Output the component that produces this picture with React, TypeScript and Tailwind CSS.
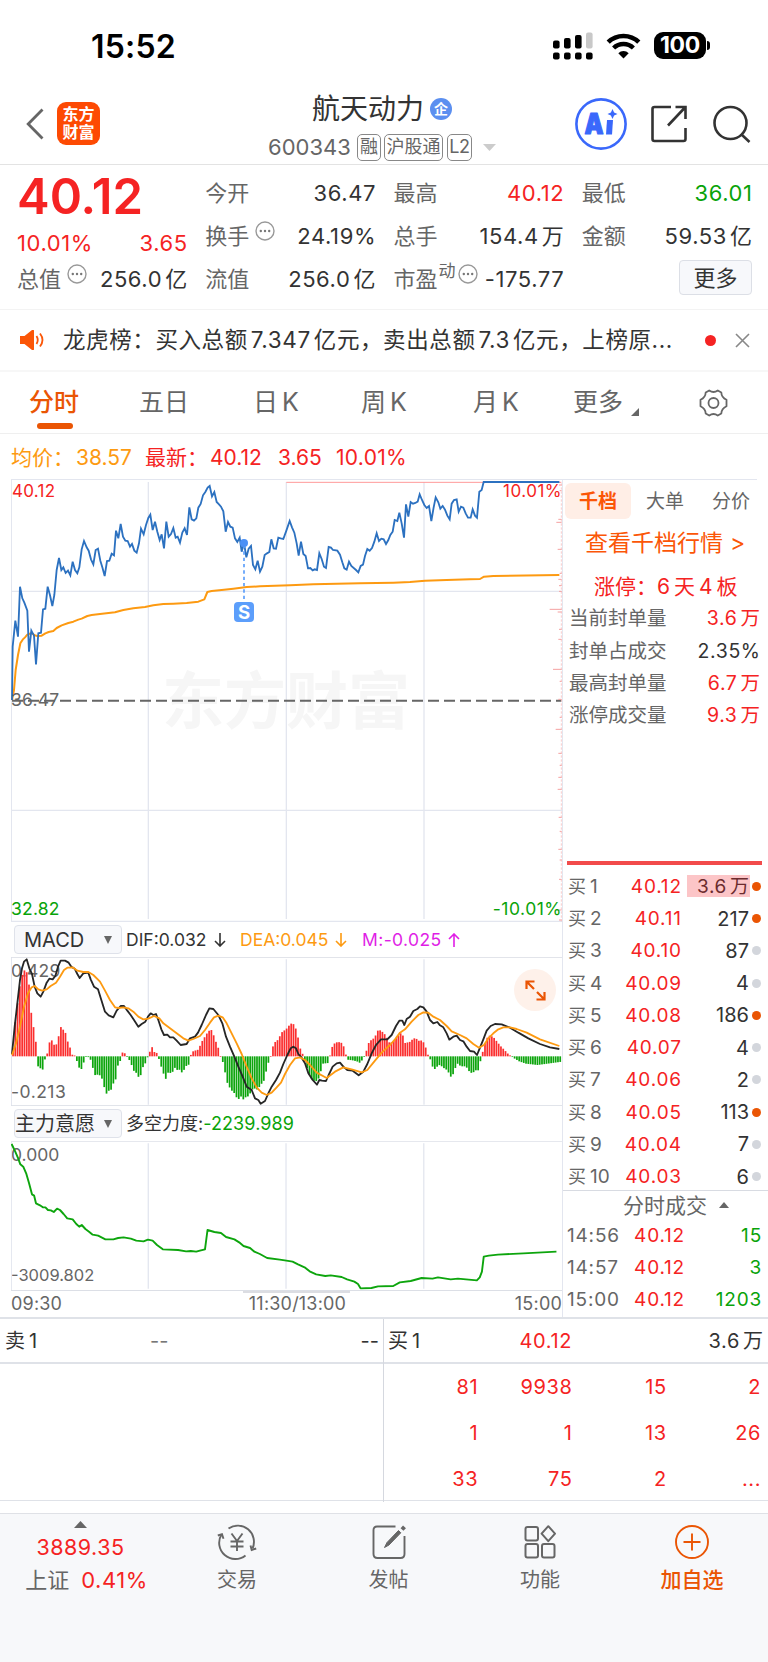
import React from "react";

type Quote = {
  label: string;
  value: string;
  color?: string;
  more?: boolean;
  sup?: string;
};

const quoteColumns: Quote[][] = [
  [
    { label: "今开", value: "36.47" },
    { label: "换手", value: "24.19%", more: true },
    { label: "流值", value: "256.0亿" },
  ],
  [
    { label: "最高", value: "40.12", color: "text-[#f52323]" },
    { label: "总手", value: "154.4万" },
    { label: "市盈", value: "-175.77", more: true, sup: "动" },
  ],
  [
    { label: "最低", value: "36.01", color: "text-[#09a309]" },
    { label: "金额", value: "59.53亿" },
  ],
];

const sealStats = [
  { label: "当前封单量", value: "3.6万", color: "text-[#f52323]" },
  { label: "封单占成交", value: "2.35%", color: "text-[#333]" },
  { label: "最高封单量", value: "6.7万", color: "text-[#f52323]" },
  { label: "涨停成交量", value: "9.3万", color: "text-[#f52323]" },
];

const buyOrders = [
  { price: "40.12", volume: "3.6万", hot: true },
  { price: "40.11", volume: "217", hot: true },
  { price: "40.10", volume: "87", hot: false },
  { price: "40.09", volume: "4", hot: false },
  { price: "40.08", volume: "186", hot: true },
  { price: "40.07", volume: "4", hot: false },
  { price: "40.06", volume: "2", hot: false },
  { price: "40.05", volume: "113", hot: true },
  { price: "40.04", volume: "7", hot: false },
  { price: "40.03", volume: "6", hot: false },
];

const trades = [
  { time: "14:56", price: "40.12", volume: "15" },
  { time: "14:57", price: "40.12", volume: "3" },
  { time: "15:00", price: "40.12", volume: "1203" },
];

const queue = [
  ["81", "9938", "15", "2"],
  ["1", "1", "13", "26"],
  ["33", "75", "2", "..."],
];

const pricePoints =
  "36,690 38,530 46,452 54,500 60,350 67,385 73,398 82,422 87,545 94,482 102,497 108,583 115,490 123,488 129,418 136,416 143,350 150,376 157,408 163,375 170,300 177,264 184,300 190,292 197,309 204,302 211,316 218,275 225,300 232,310 238,292 245,238 252,213 260,232 266,242 273,268 280,283 287,240 294,236 301,272 307,292 314,318 321,273 328,272 335,251 342,256 348,182 355,205 362,162 369,200 376,212 383,213 390,230 396,222 403,242 410,248 417,220 423,176 431,193 438,165 445,144 451,134 458,180 465,155 472,185 479,210 485,193 492,235 499,155 506,200 513,192 520,174 527,203 533,200 540,218 547,188 554,175 561,195 568,112 575,148 582,152 589,145 595,113 602,102 609,76 616,66 623,53 629,48 636,79 643,66 650,96 657,103 663,110 670,124 677,185 684,156 691,170 698,173 705,205 712,216 719,203 725,245 732,219 739,262 746,236 753,228 759,285 766,298 773,272 780,305 787,290 794,255 801,250 808,246 814,208 821,235 828,236 835,203 842,205 850,207 858,185 869,153 876,172 883,188 890,220 896,257 903,215 910,252 917,258 924,295 931,294 938,301 944,298 951,300 958,250 965,267 972,290 978,294 986,231 993,233 999,240 1012,242 1020,254 1027,277 1033,295 1040,299 1047,275 1054,288 1068,300 1075,307 1082,288 1089,284 1095,258 1102,237 1109,242 1116,234 1123,215 1130,190 1137,213 1144,206 1151,208 1158,222 1165,210 1171,195 1178,185 1184,150 1192,153 1198,128 1205,160 1212,203 1218,103 1225,140 1232,96 1239,101 1246,99 1253,95 1259,73 1266,90 1273,105 1280,114 1287,108 1294,153 1301,112 1307,82 1315,97 1321,116 1328,108 1335,119 1342,137 1349,148 1355,101 1362,90 1370,88 1376,125 1383,110 1390,113 1397,130 1404,143 1412,143 1418,118 1425,137 1431,143 1438,65 1445,60 1451,36 1678,36";

const averagePoints =
  "36,690 42,660 47,600 54,555 61,520 68,509 75,502 82,494 95,489 104,496 112,498 125,497 136,490 146,486 160,483 170,474 185,466 205,459 220,455 235,449 245,446 262,438 275,435 300,432 345,427 370,420 400,415 435,411 460,406 490,402 520,401 560,399 595,395 613,388 622,366 635,363 665,360 700,356 740,351 780,349 870,346 940,343 1080,340 1180,338 1230,336 1275,332 1340,330 1410,328 1440,327 1452,320 1480,318 1678,315";

const difPoints =
  "36,462 44,380 52,310 60,240 66,205 72,185 80,178 88,205 96,222 104,260 112,280 122,290 130,275 140,248 148,236 158,238 166,228 174,200 182,182 195,182 206,188 214,200 224,206 232,222 239,234 250,220 265,218 272,238 282,260 294,268 304,300 315,335 326,346 340,352 350,332 362,318 372,318 382,332 392,345 402,360 415,380 425,372 436,365 444,350 452,340 460,345 468,342 475,360 484,388 492,405 502,404 510,412 520,412 530,422 542,435 560,432 570,415 585,410 594,398 605,375 618,345 628,325 640,327 655,345 667,370 678,410 690,440 703,470 715,500 728,530 740,560 755,570 765,595 775,600 782,611 795,603 805,580 815,560 828,540 840,518 850,492 862,465 872,445 880,440 888,445 895,462 904,472 915,490 925,520 938,540 951,554 958,540 966,542 978,543 986,525 998,500 1010,490 1020,488 1030,500 1042,510 1058,512 1076,526 1090,515 1102,492 1115,460 1128,435 1143,418 1162,418 1175,405 1188,378 1198,362 1207,362 1213,375 1220,357 1230,350 1240,333 1252,327 1260,319 1270,322 1280,335 1290,360 1300,370 1312,366 1320,376 1330,382 1340,400 1348,419 1360,410 1370,407 1380,420 1390,424 1400,440 1410,453 1422,455 1431,465 1440,443 1450,418 1460,392 1472,378 1485,372 1505,373 1530,383 1555,398 1585,415 1620,432 1650,442 1678,447";

const deaPoints =
  "36,465 48,430 60,380 72,320 84,280 95,262 104,258 115,268 126,272 140,268 152,258 168,248 180,230 192,210 202,203 218,202 232,212 250,216 265,216 280,225 300,245 315,272 330,300 345,322 355,324 370,322 385,325 400,335 415,350 430,358 445,356 462,348 478,355 490,370 510,385 530,400 550,415 565,422 580,417 600,408 615,390 630,368 642,352 655,347 668,352 680,370 695,400 710,430 725,462 740,500 755,535 770,562 785,578 800,585 815,578 830,562 843,548 855,522 870,495 885,475 900,472 915,480 930,495 950,518 980,534 1005,515 1030,502 1055,508 1085,517 1102,510 1125,482 1145,458 1170,435 1185,418 1200,398 1215,388 1235,365 1255,345 1270,337 1285,338 1300,350 1320,360 1340,378 1355,394 1380,405 1400,415 1420,432 1437,443 1452,435 1465,415 1480,400 1495,388 1510,382 1530,382 1550,387 1580,398 1620,418 1678,438";

const forcePoints =
  "32,132 42,155 50,175 56,193 64,200 72,220 80,250 88,283 94,287 99,310 110,316 118,322 125,322 132,330 140,331 148,336 157,326 165,330 175,342 185,355 200,358 210,372 218,380 225,375 235,387 245,395 255,404 270,407 290,418 312,418 325,414 340,412 360,416 375,422 395,424 407,419 420,422 432,435 448,448 490,450 512,454 525,453 540,455 550,452 564,448 571,390 590,396 608,399 622,411 645,418 658,427 670,438 688,444 700,455 715,462 735,474 770,479 788,482 805,485 820,493 838,502 852,514 870,523 895,528 910,526 940,531 955,538 975,545 985,552 992,565 1022,564 1040,559 1082,558 1100,547 1130,543 1160,534 1190,536 1205,532 1240,538 1260,536 1312,541 1320,532 1326,515 1331,470 1345,467 1370,464 1440,460 1531,455";

// [x, height] knots, the bars in between are interpolated
const macdKnots = [
  [36, 20], [43, 100], [50, 158], [57, 210], [64, 245], [70, 258], [77, 255], [84, 220], [91, 132], [98, 88],
  [105, 43], [109, -10], [112, -32], [119, -36], [126, -40], [132, -10], [139, 8], [146, 42], [153, 48], [160, 34],
  [167, 36], [174, 63], [180, 88], [187, 80], [194, 70], [200, 46], [207, 28], [214, 5], [221, 3], [228, -14],
  [234, -33], [241, -40], [248, -20], [255, -1], [262, -2], [269, -10], [276, -35], [283, -57], [290, -55], [297, -57],
  [303, -66], [310, -92], [317, -112], [324, -103], [331, -100], [338, -80], [345, -68], [351, -28], [358, -14], [365, 12],
  [372, 9], [379, -2], [386, -12], [393, -28], [400, -46], [407, -50], [413, -62], [420, -56], [427, -30], [434, -20],
  [440, -3], [447, 14], [454, 28], [461, 12], [468, 10], [475, -10], [482, -34], [489, -55], [495, -68], [502, -48],
  [509, -50], [516, -46], [523, -33], [530, -42], [537, -40], [544, -50], [551, -38], [558, -26], [565, -25], [571, 10],
  [578, 16], [592, 20], [599, 35], [606, 50], [613, 60], [620, 72], [630, 82], [636, 70], [643, 50], [650, 30],
  [655, 20], [659, 0], [667, -20], [673, -50], [680, -82], [690, -100], [700, -110], [708, -125], [714, -128], [721, -120],
  [728, -130], [735, -122], [742, -120], [750, -108], [757, -95], [770, -100], [780, -85], [790, -72], [797, -40], [804, -14],
  [811, 5], [818, 38], [825, 45], [832, 50], [839, 65], [845, 75], [855, 80], [862, 90], [873, 100], [880, 95],
  [886, 80], [893, 50], [900, 15], [907, 5], [914, -20], [921, -42], [928, -62], [935, -72], [945, -75], [952, -70],
  [959, -48], [966, -22], [982, -20], [989, 10], [996, 35], [1003, 40], [1010, 43], [1020, 42], [1027, 35], [1033, 12],
  [1040, -10], [1055, -12], [1068, -15], [1078, -20], [1088, -5], [1095, 10], [1102, 38], [1110, 48], [1120, 55], [1127, 68],
  [1133, 82], [1140, 76], [1147, 72], [1155, 62], [1165, 42], [1175, 42], [1183, 52], [1192, 62], [1200, 70], [1208, 60],
  [1215, 32], [1222, 46], [1229, 42], [1236, 54], [1245, 54], [1255, 46], [1263, 48], [1271, 38], [1278, 15], [1283, 0],
  [1290, -12], [1297, -38], [1305, -38], [1312, -25], [1320, -28], [1330, -36], [1340, -42], [1346, -55], [1353, -66], [1360, -42],
  [1370, -22], [1380, -30], [1395, -30], [1405, -45], [1415, -52], [1422, -42], [1435, -42], [1440, -5], [1446, 15], [1453, 42],
  [1462, 62], [1470, 62], [1480, 55], [1490, 42], [1500, 30], [1510, 20], [1520, 9], [1530, 1], [1540, -6], [1555, -15],
  [1575, -22], [1610, -26], [1640, -22], [1684, -16],
];

const barHeight = (x: number) => {
  const i = macdKnots.findIndex((k) => k[0] >= x);
  if (i <= 0) return macdKnots[0][1];
  const [x0, h0] = macdKnots[i - 1];
  const [x1, h1] = macdKnots[i];
  return h0 + ((h1 - h0) * (x - x0)) / (x1 - x0);
};

const macdBars = Array.from({ length: 241 }, (_, i) => {
  const x = 36.5 + i * 6.84;
  return { x, h: barHeight(x) };
});

// [y, length] of the volume profile on the right edge
const volumeTicks = [
  [45, 8], [62, 6], [148, 10], [157, 16], [238, 12], [310, 6], [328, 10], [347, 8], [364, 8], [418, 36],
  [426, 12], [478, 8], [508, 10], [598, 26], [634, 6], [688, 10], [742, 6], [778, 18], [850, 10], [886, 6],
  [922, 10], [958, 12], [1042, 9], [1084, 6], [1138, 10], [1170, 6], [1228, 8], [1320, 10], [1350, 8],
];

const MoreDot = () => (
  <svg className="mb-[10px] shrink-0" width="20" height="20" viewBox="0 0 20 20">
    <circle cx="10" cy="10" r="9" fill="none" stroke="#999" strokeWidth="1.4" />
    <circle cx="5.8" cy="10" r="1.2" fill="#777" />
    <circle cx="10" cy="10" r="1.2" fill="#777" />
    <circle cx="14.2" cy="10" r="1.2" fill="#777" />
  </svg>
);

// puts a small gap between the digits and a trailing unit
const Num = ({ children }: { children: string }) => {
  const unit = children.match(/[万亿]$/) ? children.slice(-1) : "";
  return (
    <span className="-mr-[0.6px] tracking-[0.6px] whitespace-nowrap">
      {unit ? children.slice(0, -1) : children}
      {unit && <span className="ml-[3px]">{unit}</span>}
    </span>
  );
};

const StatusBar = () => (
  <div className="flex h-[91px] items-center justify-between pr-[58px] pl-[91px]">
    <span className="mt-[2px] text-[32px] font-semibold tracking-[0.2px] text-black">15:52</span>
    <div className="flex items-center gap-[13px]">
      <svg width="40" height="28" viewBox="0 0 40 28">
        <rect x="0" y="8.5" width="6.6" height="8" rx="2" />
        <rect x="11" y="6" width="6.6" height="10.5" rx="2" />
        <rect x="22" y="3" width="6.6" height="13.5" rx="2" />
        <rect x="33" y="0.5" width="6.6" height="16" rx="2" fill="#c8c8c8" />
        <rect x="0" y="20.5" width="6.6" height="7" rx="2" />
        <rect x="11" y="20.5" width="6.6" height="7" rx="2" />
        <rect x="22" y="20.5" width="6.6" height="7" rx="2" />
        <rect x="33" y="20.5" width="6.6" height="7" rx="2" />
      </svg>
      <svg width="35" height="26" viewBox="0 0 35 26">
        <path d="M2.2 9.2a22 22 0 0 1 30.6 0" fill="none" stroke="#000" strokeWidth="4.6" />
        <path d="M7.6 15a14.2 14.2 0 0 1 19.8 0" fill="none" stroke="#000" strokeWidth="4.4" />
        <path d="M17.5 25.5l-5.2-5.3a7.4 7.4 0 0 1 10.4 0z" />
      </svg>
      <div className="flex items-center">
        <div className="flex h-[27px] w-[52px] items-center justify-center rounded-[9px] bg-black text-[23px] font-bold tracking-[-0.3px] text-white">
          100
        </div>
        <div className="ml-[1px] h-[9px] w-[3px] rounded-r-full bg-black" />
      </div>
    </div>
  </div>
);

const Header = () => (
  <div className="grid h-[74px] grid-cols-[267px_230px_271px] items-start border-b border-[#e3e3e3]">
    <div className="mt-[11px] flex items-center gap-[13px] pl-[26px]">
      <svg width="18" height="32" viewBox="0 0 18 32">
        <path d="M16.5 1.5L2.2 16l14.3 14.5" fill="none" stroke="#666" strokeWidth="2.8" />
      </svg>
      <div className="flex h-[43px] w-[43px] flex-col items-center justify-center rounded-[9px] bg-[#fd4a03] text-[16px] leading-[17.5px] font-bold text-white">
        <span>东方</span>
        <span>财富</span>
      </div>
    </div>
    <div className="mt-[2px] flex flex-col items-center">
      <div className="flex h-[32px] items-center gap-[6px]">
        <span className="text-[28px] text-[#333]">航天动力</span>
        <span className="flex h-[22px] w-[22px] items-center justify-center rounded-full bg-[#5b8ff0] text-[14px] font-bold text-white">
          企
        </span>
      </div>
      <div className="mt-[8px] flex h-[28px] items-center text-[21px] text-[#666]">
        <span className="mr-[6px] text-[22px]">600343</span>
        <span className="mr-[3px] flex h-[27px] w-[24px] items-center justify-center rounded-[5px] border border-[#888] text-[18px]">融</span>
        <span className="mr-[4px] flex h-[27px] w-[59px] items-center justify-center rounded-[5px] border border-[#888] text-[18px] whitespace-nowrap">
          沪股通
        </span>
        <span className="flex h-[27px] w-[25px] items-center justify-center rounded-[5px] border border-[#888] text-[18px] tracking-[-0.5px]">L2</span>
        <svg className="ml-[11px]" width="13" height="7" viewBox="0 0 13 7">
          <path d="M0 0h13L6.5 7z" fill="#ccc" />
        </svg>
      </div>
    </div>
    <div className="mt-[7px] flex h-[52px] items-center pl-[78px]">
      <svg width="52" height="52" viewBox="0 0 52 52">
        <circle cx="26" cy="26" r="24.6" fill="#fff" stroke="#3a68fb" strokeWidth="2.6" />
        <text
          x="9.5"
          y="36"
          fontSize="28"
          fontWeight="900"
          fill="#3a68fb"
          stroke="#3a68fb"
          strokeWidth="1.2"
          strokeLinejoin="round"
          textLength="19"
          lengthAdjust="spacingAndGlyphs"
        >
          A
        </text>
        <path d="M32 22h6l-1 14.5h-6z" fill="#3a68fb" />
        <path d="M37.5 11l1.6 3.4 3.4 1.6-3.4 1.6-1.6 3.4-1.6-3.4-3.4-1.6 3.4-1.6z" fill="#3a68fb" />
      </svg>
      <svg className="ml-[24px]" width="37" height="38" viewBox="0 0 37 38" fill="none" stroke="#333" strokeWidth="2.6">
        <path d="M20 2H3.5Q1.5 2 1.5 4v30q0 2 2 2h29q2 0 2-2V23" />
        <path d="M24.5 2h10v12M34 2.5L17 20.5" />
      </svg>
      <svg className="ml-[25px]" width="38" height="38" viewBox="0 0 38 38" fill="none" stroke="#333" strokeWidth="2.6">
        <circle cx="17.5" cy="18" r="16" />
        <path d="M28 29l8.5 8" />
      </svg>
    </div>
  </div>
);

const Quotes = () => (
  <div className="grid h-[145px] grid-cols-4 gap-x-[18px] border-b border-[#f3f3f3] pt-[6px] pr-[16px] pl-[17px] text-[22px]">
    <div className="flex flex-col text-[#f52323]">
      <div className="flex h-[50px] items-center text-[49px] font-semibold">40.12</div>
      <div className="flex h-[43px] items-center justify-between">
        <Num>10.01%</Num>
        <Num>3.65</Num>
      </div>
      <div className="flex h-[30px] items-center justify-between">
        <span className="flex items-center gap-[6px] text-[#666]">
          总值
          <MoreDot />
        </span>
        <span className="text-[#333]">
          <Num>256.0亿</Num>
        </span>
      </div>
    </div>
    {quoteColumns.map((column, i) => (
      <div key={i} className="flex flex-col">
        {column.map((q) => (
          <div key={q.label} className="flex h-[43px] items-center justify-between">
            <span className="flex items-center text-[#666]">
              {q.label}
              {q.sup && <span className="mb-[14px] ml-px text-[17px]">{q.sup}</span>}
              {q.more && <span className={q.sup ? "ml-[2px]" : "ml-[6px]"}><MoreDot /></span>}
            </span>
            <span className={q.color || "text-[#333]"}>
              <Num>{q.value}</Num>
            </span>
          </div>
        ))}
        {i === 2 && (
          <button className="mt-[3px] flex h-[35px] w-[73px] items-center justify-center self-end rounded-[4px] border border-[#dcdfe6] bg-[#f7f8fb] text-[#333]">
            更多
          </button>
        )}
      </div>
    ))}
  </div>
);

const Notice = () => (
  <div className="flex h-[62px] items-center border-b-2 border-[#f7f7f7] pl-[20px] text-[22.5px] text-[#333]">
    <svg width="25" height="20" viewBox="0 0 25 20">
      <path d="M0 6h4.5L12 0q2-1 2 1v18q0 2-2 1l-7.5-6H0z" fill="#fb5607" />
      <path d="M16.5 6q2.5 4 0 8M20 3.5q5 6.5 0 13" fill="none" stroke="#fb5607" strokeWidth="1.8" />
    </svg>
    <span className="ml-[18px] w-[611px] tracking-[0.6px] whitespace-nowrap">
      龙虎榜：买入总额<span className="mx-[3px]">7.347</span>亿元，卖出总额
      <span className="mx-[3px]">7.3</span>亿元，上榜原...
    </span>
    <span className="ml-[31px] h-[11px] w-[11px] rounded-full bg-[#f52323]" />
    <svg className="ml-[19px]" width="15" height="15" viewBox="0 0 15 15">
      <path d="M1 1l13 13M14 1L1 14" stroke="#888" strokeWidth="1.6" />
    </svg>
  </div>
);

const Tabs = () => (
  <div className="flex h-[62px] items-center border-b border-[#efefef] text-[25px] text-[#666]">
    <div className="relative ml-[29px] w-[110px] font-medium text-[#ea5504]">
      分时
      <span className="absolute top-[33px] left-[8px] h-[6px] w-[36px] rounded-full bg-[#ea5504]" />
    </div>
    <div className="w-[114px]">五日</div>
    <div className="w-[108px]">日<span className="ml-[4px]">K</span></div>
    <div className="w-[112px]">周<span className="ml-[4px]">K</span></div>
    <div className="w-[100px]">月<span className="ml-[4px]">K</span></div>
    <div className="flex w-[126px] items-center gap-[8px]">
      更多
      <svg className="mt-[18px]" width="8" height="8" viewBox="0 0 8 8">
        <path d="M8 0v8H0z" fill="#666" />
      </svg>
    </div>
    <svg width="29" height="28" viewBox="0 0 29 28" fill="none" stroke="#666" strokeWidth="1.8">
      <path
        d="M10.2 1.5Q14.5 4.5 18.8 1.5L22.3 3.5Q22.5 8.5 27.5 10.8V17.2Q22.5 19.5 22.3 24.5L18.8 26.5Q14.5 23.5 10.2 26.5L6.7 24.5Q6.5 19.5 1.5 17.2V10.8Q6.5 8.5 6.7 3.5Z"
        strokeLinejoin="round"
      />
      <circle cx="14.5" cy="14" r="5" />
    </svg>
  </div>
);

const PriceChart = () => (
  <div className="relative h-[443px]">
    <span className="absolute top-[189px] left-[151px] text-[62px] leading-[68px] font-bold text-[#f6f6f6]">东方财富</span>
    <svg className="absolute inset-0" width="551" height="443" viewBox="33 27 1653 1329">
      <g stroke="#e3e6ef" strokeWidth="4">
        <path d="M34 27V1354M445 36V1347M859 36V1347M1272 36V1347M33 364H1686M33 1021H1686" />
        <path d="M33 28H1686M33 1354H1686" />
      </g>
      <path d="M36 692H1684" stroke="#666" strokeWidth="6" strokeDasharray="33 15" />
      <path d="M859 37H1684" stroke="#f99" strokeWidth="3" />
      <path d="M1684 40V1354" stroke="#f7b0b0" strokeWidth="2" strokeDasharray="7 5" />
      <g stroke="#f5a0a0" strokeWidth="3">
        {volumeTicks.map(([y, len]) => (
          <path key={y} d={`M${1685 - len} ${y}H1685`} />
        ))}
      </g>
      <polyline points={averagePoints} fill="none" stroke="#fd9a11" strokeWidth="6" strokeLinejoin="round" />
      <polyline points={pricePoints} fill="none" stroke="#2c71c0" strokeWidth="5.5" />
      <path d="M732 225V396" stroke="#5c9efb" strokeWidth="5" strokeDasharray="10 9" />
      <circle cx="732" cy="219" r="12" fill="#4b90f5" />
      <rect x="702" y="396" width="60" height="60" rx="12" fill="#5c9efb" />
      <text x="732" y="446" textAnchor="middle" fontSize="56" fontWeight="700" fill="#fff">S</text>
    </svg>
    <span className="absolute top-[3px] left-px text-[17px] leading-[18px] tracking-[0.3px] text-[#f52323]">40.12</span>
    <span className="absolute top-[3px] right-0 text-[17px] leading-[18px] tracking-[0.5px] text-[#f52323]">10.01%</span>
    <span className="absolute top-[212px] left-0 text-[17.5px] leading-[18px] tracking-[0.2px] text-[#666]">36.47</span>
    <span className="absolute top-[421px] left-0 text-[17.5px] leading-[18px] tracking-[0.2px] text-[#09a309]">32.82</span>
    <span className="absolute top-[421px] right-0 text-[17.5px] leading-[18px] tracking-[0.5px] text-[#09a309]">-10.01%</span>
  </div>
);

const IndicatorButton = ({ children }: { children: React.ReactNode }) => (
  <div className="ml-[3px] flex h-[29px] w-[108px] items-center justify-between rounded-[4px] border border-[#dfe2ea] bg-[#f7f8fb] pr-[9px] text-[20px] whitespace-nowrap text-[#333]">
    {children}
    <svg width="8" height="8" viewBox="0 0 8 8">
      <path d="M0 0h8L4 8z" fill="#666" />
    </svg>
  </div>
);

const Arrow = ({ up }: { up?: boolean }) => (
  <svg width="12" height="14" viewBox="0 0 12 14" fill="none" stroke="currentColor" strokeWidth="1.6">
    <path d={up ? "M6 14V1M1 6l5-5 5 5" : "M6 0v13M1 8l5 5 5-5"} />
  </svg>
);

const MacdChart = () => (
  <div className="relative h-[149px]">
    <span className="absolute top-[5px] left-0 text-[17.5px] leading-[18px] tracking-[0.2px] text-[#666]">0.429</span>
    <span className="absolute top-[126px] left-0 text-[17.5px] leading-[18px] tracking-[0.5px] text-[#666]">-0.213</span>
    <svg className="absolute inset-0" width="551" height="149" viewBox="33 171 1653 447">
      <path d="M34 171V618M445 178V614M859 178V614M1272 178V614" stroke="#e3e6ef" strokeWidth="4" />
      <path d="M33 172H1686M33 617H1686" stroke="#dcdfe6" strokeWidth="3" />
      {macdBars.map(({ x, h }) => (
        <rect
          key={x}
          x={x}
          y={h > 0 ? 469 - h : 469}
          width="5.2"
          height={Math.max(Math.abs(h), 2)}
          fill={h > 0 ? "#fb2f2f" : "#0da50d"}
        />
      ))}
      <polyline points={difPoints} fill="none" stroke="#262626" strokeWidth="5.5" strokeLinejoin="round" />
      <polyline points={deaPoints} fill="none" stroke="#fd9a11" strokeWidth="5.5" strokeLinejoin="round" />
    </svg>
    <div className="absolute top-[12px] right-[6px] flex h-[42px] w-[42px] items-center justify-center rounded-full bg-[#fef1ea]">
      <svg width="21" height="21" viewBox="0 0 21 21" fill="none" stroke="#ea5504" strokeWidth="2.2">
        <path d="M1.5 9V1.500h8M1.500 1.500l7.500 7.500M19.500 12v7.500h-8M19.500 19.500l-7.500-7.500" />
      </svg>
    </div>
  </div>
);

const ForceChart = () => (
  <div className="relative h-[149px]">
    <span className="absolute top-[5px] left-0 text-[17.5px] leading-[18px] text-[#666]">0.000</span>
    <span className="absolute top-[125px] left-0 text-[16.5px] leading-[18px] text-[#666]">-3009.802</span>
    <svg className="absolute inset-0" width="551" height="149" viewBox="30.3 123 1516 447" preserveAspectRatio="none">
      <path d="M31 123V570M408 130V566M787 130V566M1166 130V566" stroke="#e3e6ef" strokeWidth="3.6" />
      <path d="M30 124.5H1546" stroke="#e6e8ee" strokeWidth="3" />
      <polyline
        points={forcePoints}
        fill="none"
        stroke="#0da50d"
        strokeWidth="1.9"
        strokeLinejoin="round"
        vectorEffect="non-scaling-stroke"
      />
    </svg>
  </div>
);

const Charts = () => (
  <div className="w-[552px] shrink-0 border-r border-[#e3e6ef]">
    <PriceChart />
    <div className="flex h-[35px] items-center text-[17.5px] whitespace-nowrap">
      <IndicatorButton>
        <span className="pl-[9px]">MACD</span>
      </IndicatorButton>
      <span className="ml-[4px] flex w-[114px] items-center gap-[8px] text-[#333]">
        DIF:0.032 <Arrow />
      </span>
      <span className="flex w-[122px] items-center gap-[7px] text-[#fd9a11]">
        DEA:0.045 <Arrow />
      </span>
      <span className="flex items-center gap-[6px] tracking-[0.4px] text-[#e01ee6]">
        M:-0.025 <Arrow up />
      </span>
    </div>
    <MacdChart />
    <div className="flex h-[35px] items-center text-[18px] whitespace-nowrap text-[#333]">
      <IndicatorButton>主力意愿</IndicatorButton>
      <span className="ml-[4px]">
        多空力度:<span className="tracking-[0.1px] text-[#09a309]">-2239.989</span>
      </span>
    </div>
    <ForceChart />
    <div className="relative flex h-[27px] items-center justify-between border-t border-[#dcdfe6] text-[18px] tracking-[0.2px] text-[#666]">
      <span className="absolute top-0 left-[232px] h-[2px] w-[107px] bg-[#dcdde2]" />
      <span>09:30</span>
      <span className="pl-[18px]">11:30/13:00</span>
      <span>15:00</span>
    </div>
  </div>
);

const SidePanel = () => (
  <div className="w-[205px] text-[19px]">
    <div className="flex h-[42px] items-center pl-[2px] text-[#666]">
      <span className="flex h-[36px] w-[66px] items-center justify-center rounded-[6px] bg-[#ffeee6] font-bold text-[#fb5607]">千档</span>
      <span className="ml-[15px]">大单</span>
      <span className="ml-[28px]">分价</span>
    </div>
    <div className="flex h-[43px] items-center pl-[22px] text-[23px] whitespace-nowrap text-[#fb5607]">
      查看千档行情<span className="ml-[7px]">&gt;</span>
    </div>
    <div className="flex h-[38px] items-center pt-[4px] pl-[31px] text-[21px] whitespace-nowrap text-[#f52323]">
      涨停：<span className="mr-[4px]">6</span>天<span className="mx-[4px]">4</span>板
    </div>
    {sealStats.map((s) => (
      <div key={s.label} className="flex h-[32.3px] items-center justify-between pr-[8px] pl-[6px] text-[19.5px]">
        <span className="text-[#666]">{s.label}</span>
        <span className={s.color}>
          <Num>{s.value}</Num>
        </span>
      </div>
    ))}
    <div className="mt-[129px] ml-[4px] h-[4px] w-[195px] bg-[#f24b4b]" />
    <div className="mt-[5px] h-[320px]">
      {buyOrders.map((o, i) => (
        <div key={o.price} className="flex h-[32.27px] items-center pl-[5px]">
          <span className="w-[45px] text-[18px] whitespace-nowrap text-[#666]">
            买<span className="ml-[4px] text-[19px]">{i + 1}</span>
          </span>
          <span className="-mr-[0.8px] w-[68.8px] text-right tracking-[0.8px] text-[#f52323]">{o.price}</span>
          {i === 0 ? (
            <span className="ml-[6px] flex h-[22px] w-[63px] items-center justify-end bg-[#fcc5c7] pr-[1px] text-[#6b2b2e]">
              <Num>{o.volume}</Num>
            </span>
          ) : (
            <span className="ml-[6px] w-[63px] pr-[1px] text-right text-[20px] text-[#333]">{o.volume}</span>
          )}
          <span className={o.hot ? "ml-[2px] h-[9px] w-[9px] rounded-full bg-[#ea5504]" : "ml-[2px] h-[9px] w-[9px] rounded-full bg-[#d3d6dc]"} />
        </div>
      ))}
    </div>
    <div className="flex h-[29px] items-center border-t border-[#d8dbe2] pl-[60px] text-[21px] text-[#666]">
      分时成交
      <svg className="ml-[12px]" width="10" height="6" viewBox="0 0 10 6">
        <path d="M5 0l5 6H0z" fill="#666" />
      </svg>
    </div>
    {trades.map((t) => (
      <div key={t.time} className="flex h-[32.3px] items-center pl-[4px] tracking-[0.8px]">
        <span className="w-[60px] text-[#666]">{t.time}</span>
        <span className="w-[58px] text-right text-[#f52323]">{t.price}</span>
        <span className="w-[77px] text-right text-[#09a309]">{t.volume}</span>
      </div>
    ))}
  </div>
);

const OrderQueue = () => (
  <div className="grid h-[184px] grid-cols-2 border-y border-t-2 border-[#dfe2e8] text-[20px]">
    <div className="border-r border-[#d5d8df]">
      <div className="flex h-[45px] items-center border-b-2 border-[#dfe2e8] text-[#333]">
        <span className="w-[150px] pl-[5px]">
          卖<span className="ml-[4px]">1</span>
        </span>
        <span className="flex-1 text-[#777]">--</span>
        <span className="pr-[4px]">--</span>
      </div>
    </div>
    <div>
      <div className="flex h-[45px] items-center border-b-2 border-[#dfe2e8] text-[#333]">
        <span className="w-[94px] pl-[4px]">
          买<span className="ml-[4px]">1</span>
        </span>
        <span className="w-[94px] text-right tracking-[0.6px] text-[#f52323]">40.12</span>
        <span className="w-[191px] text-right">
          <Num>3.6万</Num>
        </span>
      </div>
      {queue.map((row, i) => (
        <div key={i} className="grid h-[46px] grid-cols-4 items-center pr-[7px] text-right tracking-[0.6px] text-[#f52323]">
          {row.map((n, j) => (
            <span key={j}>{n}</span>
          ))}
        </div>
      ))}
    </div>
  </div>
);

const BottomNav = () => (
  <div className="mt-[12px] flex h-[149px] border-t border-[#dfe1e6] bg-[#f7f8fa] text-[20px] text-[#666]">
    <div className="flex w-[161px] flex-col items-center pt-[7px] text-[21.5px]">
      <svg width="13" height="7" viewBox="0 0 13 7">
        <path d="M6.5 0L13 7H0z" fill="#666" />
      </svg>
      <span className="mt-[4px] flex h-[32px] items-center tracking-[0.5px] text-[#f52323]">3889.35</span>
      <span className="flex h-[32px] items-center gap-[12px] pl-[12px] text-[22px]">
        上证 <span className="tracking-[0.5px] text-[#f52323]">0.41%</span>
      </span>
    </div>
    <div className="flex w-[152px] flex-col items-center pt-[10px]">
      <svg width="40" height="36" viewBox="0 0 40 36" fill="none" stroke="#666" strokeWidth="1.9">
        <path d="M11.5 4.5A16.2 16.2 0 0 1 35.5 24.5M28.5 31.5A16.2 16.2 0 0 1 4.5 10.5" />
        <path d="M0.8 11.5L5 10.2l1.5 4.5M39.2 24.5l-4.5 1.5-1.2-4.5" />
        <path d="M14.5 9.5L20 17l5.5-7.5M20 17v10M13.5 17.5h13M13.5 22.5h13" />
      </svg>
      <span className="mt-[5px] flex h-[30px] items-center">交易</span>
    </div>
    <div className="flex w-[151px] flex-col items-center pt-[10px]">
      <svg width="34" height="36" viewBox="0 0 34 36" fill="none" stroke="#666" strokeWidth="1.9">
        <path d="M23.5 2.5H5Q1.5 2.5 1.5 6v24q0 4 4 4h23q4 0 4-4V12" />
        <path d="M12.5 23.5L15 18.5 26.5 6.5l2.3 2.3L17 21z" fill="#666" strokeWidth="1" />
        <path d="M30 5.5l2.5-2.7" strokeWidth="4" />
      </svg>
      <span className="mt-[5px] flex h-[30px] items-center">发帖</span>
    </div>
    <div className="flex w-[152px] flex-col items-center pt-[10px]">
      <svg width="32" height="36" viewBox="0 0 32 36" fill="none" stroke="#666" strokeWidth="2">
        <rect x="1.5" y="3" width="12.5" height="13.5" rx="2" />
        <rect x="1.5" y="20" width="12.5" height="13.5" rx="2" />
        <rect x="18" y="20" width="12.5" height="13.5" rx="2" />
        <path d="M24.3 2.2L31 9.7l-6.7 7.5-6.7-7.5z" strokeLinejoin="round" />
      </svg>
      <span className="mt-[5px] flex h-[30px] items-center">功能</span>
    </div>
    <div className="flex w-[152px] flex-col items-center pt-[10px] font-medium text-[#ea5504]">
      <svg width="36" height="36" viewBox="0 0 36 36" fill="none" stroke="#ea5504" strokeWidth="1.9">
        <circle cx="18" cy="18" r="16" />
        <path d="M18 9.5v17M9.5 18h17" />
      </svg>
      <span className="mt-[4px] flex h-[30px] items-center text-[21px]">加自选</span>
    </div>
  </div>
);

const App = () => {
  return (
    <div className="flex h-[1662px] w-[768px] flex-col overflow-hidden bg-white font-['Inter','Noto_Sans_CJK_SC',sans-serif] leading-none">
      <StatusBar />
      <Header />
      <Quotes />
      <Notice />
      <Tabs />
      <div className="flex h-[45px] items-center pt-[2px] pl-[11px] text-[21px] whitespace-nowrap text-[#f52323]">
        <span className="text-[#fd9a11]">均价：</span>
        <span className="w-[71px] pl-[2px] text-[#fd9a11]">38.57</span>
        <span>最新：</span>
        <span className="w-[70px] pl-[2px]">40.12</span>
        <span className="w-[58px]">3.65</span>
        <span className="tracking-[0.3px]">10.01%</span>
      </div>
      <div className="flex h-[838px] pl-[11px]">
        <Charts />
        <div className="flex flex-col">
          <div className="h-px w-[194px] shrink-0 bg-[#e3e6ef]" />
          <SidePanel />
        </div>
      </div>
      <OrderQueue />
      <BottomNav />
    </div>
  );
};

export default App;
